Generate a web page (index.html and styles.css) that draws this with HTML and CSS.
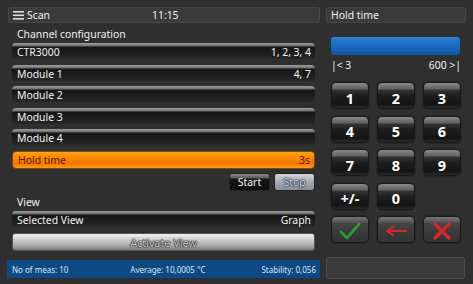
FILE: index.html
```html
<!doctype html>
<html lang="en">
  <head>
    <meta charset="UTF-8" />
    <meta name="viewport" content="width=device-width, initial-scale=1.0" />
    <title>Scan - Hold time</title>
    <link rel="stylesheet" href="styles.css">
  </head>
  <body>
    <div class="screen">
      <div class="left">
        <div class="topbar">
          <span class="menu">
            <svg width="11" height="9" viewBox="0 0 11 9">
              <rect x="0" y="0" width="11" height="1.6" fill="#ddd" />
              <rect x="0" y="3.5" width="11" height="1.6" fill="#ddd" />
              <rect x="0" y="7" width="11" height="1.6" fill="#ddd" />
            </svg>
            Scan
          </span>
          <span class="clock">11:15</span>
        </div>

        <div class="section">Channel configuration</div>
        <div class="rows">
          <div class="row"><span>CTR3000</span><span>1, 2, 3, 4</span></div>
          <div class="row"><span>Module 1</span><span>4, 7</span></div>
          <div class="row"><span>Module 2</span><span></span></div>
          <div class="row"><span>Module 3</span><span></span></div>
          <div class="row"><span>Module 4</span><span></span></div>
          <div class="row active"><span>Hold time</span><span>3s</span></div>
        </div>
        <div class="startstop">
          <button class="btn dark">Start</button>
          <button class="btn light">Stop</button>
        </div>

        <div class="section view">View</div>
        <div class="row selected"><span>Selected View</span><span>Graph</span></div>
        <button class="activate">Activate View</button>

        <div class="status">
          <span>No of meas: 10</span>
          <span class="avg">Average: 10,0005 °C</span>
          <span class="stab">Stability: 0,056</span>
        </div>
      </div>

      <div class="right">
        <div class="title">Hold time</div>
        <div class="slider"></div>
        <div class="limits"><span>|&lt; 3</span><span>600 &gt;|</span></div>
        <div class="keypad">
          <button class="key">1</button>
          <button class="key">2</button>
          <button class="key">3</button>
          <button class="key">4</button>
          <button class="key">5</button>
          <button class="key">6</button>
          <button class="key">7</button>
          <button class="key">8</button>
          <button class="key">9</button>
          <button class="key">+/-</button>
          <button class="key">0</button>
          <span></span>
          <button class="key action">
            <svg width="22" height="18" viewBox="0 0 22 18">
              <path d="M2 10 L8 16 L20 2" fill="none" stroke="#1fa82a" stroke-width="2.6" stroke-linecap="round" stroke-linejoin="round" />
            </svg>
          </button>
          <button class="key action">
            <svg width="24" height="12" viewBox="0 0 24 12">
              <path d="M22 6 H4 M9 2 L3 6 L9 10" fill="none" stroke="#d8262a" stroke-width="2" stroke-linecap="round" stroke-linejoin="round" />
            </svg>
          </button>
          <button class="key action">
            <svg width="20" height="18" viewBox="0 0 20 18">
              <path d="M3 2 L17 16 M17 2 L3 16" fill="none" stroke="#d8262a" stroke-width="3.2" stroke-linecap="round" />
            </svg>
          </button>
        </div>
        <div class="message"></div>
      </div>
    </div>
  </body>
</html>
```

FILE: styles.css
```css
* {
  box-sizing: border-box;
}

html,
body {
  margin: 0;
  padding: 0;
}

body {
  background: #2f2f2f;
  font-family: "Noto Sans", "Open Sans", sans-serif;
  font-size: 10.4px;
  color: #f2f2f2;
}

.screen {
  width: 473px;
  height: 284px;
  display: flex;
  gap: 6px;
  padding: 7px 0 0 7px;
}

.left {
  width: 313px;
  display: flex;
  flex-direction: column;
}

.topbar {
  height: 16px;
  margin-left: 1px;
  background: #3a3a3a;
  border: 1px solid #464646;
  border-radius: 2px;
  display: flex;
  align-items: center;
  padding: 0 4px;
}

.menu {
  display: flex;
  align-items: center;
  gap: 3px;
  width: 132px;
}

.clock {
  margin-left: 7px;
}

.section {
  margin: 3px 0 0 10px;
  height: 17px;
  line-height: 17px;
}

.rows {
  display: flex;
  flex-direction: column;
  gap: 5.6px;
  margin-left: 5px;
  width: 303px;
}

.row {
  height: 16px;
  border-radius: 4px;
  background: linear-gradient(#a2a2a2 0, #6c6c6c 3px, #141414 4px, #1d1d1d 60%, #272727 100%);
  display: flex;
  justify-content: space-between;
  align-items: flex-end;
  padding: 0 4px 0 5px;
  line-height: 14px;
}

.row.active {
  height: 18px;
  margin-top: 0.4px;
  align-items: center;
  background: linear-gradient(#ffa01a, #ff8a00 35%, #f27400 70%, #ff9a10);
  color: #5a1800;
  border: 1px solid #7a4a10;
}

.startstop {
  display: flex;
  justify-content: flex-end;
  gap: 4px;
  margin-top: 4px;
  margin-right: 5px;
}

.btn {
  width: 41px;
  height: 18px;
  border-radius: 3px;
  font-family: inherit;
  font-size: 10.4px;
  padding: 0;
  border: 1px solid #222;
}

.btn.dark {
  background: linear-gradient(#8a8a8a 0, #5a5a5a 4px, #161616 5px, #0c0c0c 100%);
  color: #f4f4f4;
}

.btn.light {
  background: linear-gradient(#d2d5d8, #a6abb0 50%, #8c9096);
  color: #d4def0;
  text-shadow: 0 0 1px #1a2436, 0 0 1px #1a2436, 0 0 2px #1a2436;
}

.section.view {
  margin-top: 1px;
  height: 19px;
  line-height: 20px;
}

.row.selected {
  margin-left: 5px;
  width: 303px;
  margin-top: 0;
}

.activate {
  margin: 6px 0 0 5px;
  width: 303px;
  height: 18px;
  border: 1px solid #555;
  border-radius: 3px;
  background: linear-gradient(#f0f0f0, #d4d4d4 30%, #a6a6a6 75%, #7c7c7c);
  font-family: inherit;
  font-size: 10.8px;
  color: #cfcfcf;
  text-shadow: 0 0 1px #111, 0 0 1px #111, 0 0 2px #222;
  padding: 0;
}

.status {
  margin-top: 9px;
  height: 18px;
  background: #0d4982;
  font-size: 8px;
  display: flex;
  align-items: center;
  padding: 0 4px 0 5px;
  color: #dfe8f2;
}

.avg {
  margin-left: 62px;
}

.stab {
  margin-left: auto;
}

.right {
  width: 140px;
  display: flex;
  flex-direction: column;
}

.title {
  height: 16px;
  background: #3a3a3a;
  border: 1px solid #464646;
  border-radius: 2px;
  padding-left: 4px;
  line-height: 14px;
}

.slider {
  margin: 14px 0 0 5px;
  width: 129px;
  height: 18px;
  border-radius: 3px;
  background: linear-gradient(#2a7fd6, #1664b8 60%, #0f559e);
}

.limits {
  display: flex;
  justify-content: space-between;
  margin: 3px 0 0 5px;
  width: 130px;
  height: 14px;
  line-height: 14px;
  color: #f2f2f2;
}

.keypad {
  display: grid;
  grid-template-columns: 38px 38px 38px;
  grid-auto-rows: 27px;
  column-gap: 8px;
  row-gap: 6.6px;
  margin: 10px 0 0 5px;
}

.key {
  border: 1px solid #1a1a1a;
  border-radius: 5px;
  padding: 0;
  font-family: inherit;
  font-size: 14.5px;
  font-weight: bold;
  color: #fff;
  background: linear-gradient(#8a8a8a 0, #606060 6px, #343434 7px, #1e1e1e 50%, #141414 85%, #2a2a2a 100%);
  box-shadow: 0 0 0 1px #272727;
  display: flex;
  align-items: center;
  justify-content: center;
  padding-top: 4px;
}

.key.action {
  background: linear-gradient(#747474 0, #585858 5px, #464646 6px, #3a3a3a 60%, #333 100%);
  padding-top: 2px;
}

.message {
  margin-top: 14px;
  width: 139px;
  height: 22px;
  background: #3a3a3a;
  border: 1px solid #4a4a4a;
  border-radius: 2px;
}
```
